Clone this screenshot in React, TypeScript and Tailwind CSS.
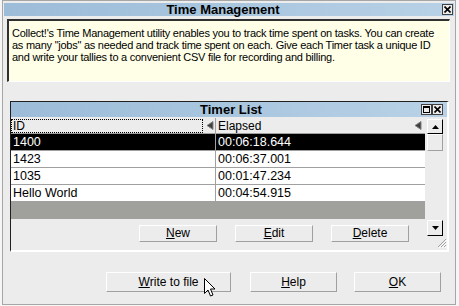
import React from "react";

const font = { fontFamily: '"Liberation Sans", Arial, sans-serif' };

function XBox({ className = "" }: { className?: string }) {
  return (
    <span
      className={`flex h-[11px] w-[11px] items-center justify-center border border-[#404040] bg-[#ececec] ${className}`}
    >
      <svg width="7" height="7" viewBox="0 0 7 7">
        <path d="M0.5 0.5L6.5 6.5M6.5 0.5L0.5 6.5" stroke="#000" strokeWidth="1.6" />
      </svg>
    </span>
  );
}

function RestoreBox() {
  return (
    <span className="flex h-[11px] w-[11px] items-center justify-center border border-[#404040] bg-[#ececec]">
      <span className="h-[7px] w-[7px] border border-black border-t-2" />
    </span>
  );
}

function SortArrow() {
  return (
    <svg width="8" height="9" viewBox="0 0 8 9">
      <path d="M7 0.5L1 4.5L7 8.5Z" fill="#404040" stroke="#808080" strokeWidth="1" />
    </svg>
  );
}

function PanelButton({ label }: { label: React.ReactNode }) {
  return (
    <div className="flex h-[17px] w-[78px] items-center justify-center border border-t-white border-l-white border-r-[#a0a0a0] border-b-[#a0a0a0] bg-[#ececec] text-[12px] text-black">
      {label}
    </div>
  );
}

function DialogButton({ label, w }: { label: React.ReactNode; w: string }) {
  return (
    <div
      className={`flex h-[20px] ${w} items-center justify-center border border-t-white border-l-white border-r-[#a0a0a0] border-b-[#a0a0a0] bg-[#ececec] text-[12px] text-black`}
    >
      {label}
    </div>
  );
}

const rows = [
  ["1400", "00:06:18.644"],
  ["1423", "00:06:37.001"],
  ["1035", "00:01:47.234"],
  ["Hello World", "00:04:54.915"],
];

export default function App() {
  return (
    <div className="flex h-[306px] w-[459px] overflow-hidden bg-[#f6f6f6]" style={font}>
      {/* background window edge */}
      <div className="w-[2px]" />

      <div className="flex h-[305px] w-[454px] flex-col border border-[#a6a6a6] bg-[#ececec]">
        {/* title bar */}
        <div className="mx-[1px] mt-[2px] flex h-[13px] items-center bg-gradient-to-r from-[#9cbcd8] via-[#a9c6df] to-[#b8d1e6] pr-[1px]">
          <div className="flex-1 text-center text-[13px] font-bold leading-none text-black">
            Time Management
          </div>
          <XBox />
        </div>

        {/* description */}
        <div className="ml-[4px] mr-[5px] mt-[3px] h-[63px] whitespace-nowrap border-l-2 border-t-2 border-l-[#303030] border-t-[#303030] border-r border-b border-r-white border-b-white bg-[#ffffe8] px-[3px] pt-[6px] text-[11px] leading-[12px] tracking-[-0.25px] text-black">
          Collect!'s Time Management utility enables you to track time spent on tasks. You can create
          <br />
          as many "jobs" as needed and track time spent on each. Give each Timer task a unique ID
          <br />
          and write your tallies to a convenient CSV file for recording and billing.
        </div>

        {/* timer list panel */}
        <div className="ml-[7px] mr-[6px] mt-[19px] flex h-[151px] flex-col border-l border-t border-l-[#202020] border-t-[#202020] border-r-2 border-b-2 border-r-white border-b-white">
          <div className="flex h-[15px] items-center bg-gradient-to-r from-[#9cbcd8] via-[#a9c6df] to-[#b8d1e6] pr-[4px]">
            <div className="flex-1 pl-[30px] text-center text-[13px] font-bold leading-none text-black">
              Timer List
            </div>
            <RestoreBox />
            <XBox />
          </div>

          <div className="flex flex-1">
            <div className="flex w-[414px] flex-col">
              {/* header */}
              <div className="mt-[1px] flex h-[16px] border-b border-[#a0a0a0] bg-[#ececec] text-[12px] text-black">
                <div className="flex w-[205px] items-center border-r border-[#a0a0a0]">
                  <div className="flex h-[14px] w-[192px] items-center border border-dotted border-black pl-[1px]">
                    ID
                  </div>
                  <div className="ml-[3px]">
                    <SortArrow />
                  </div>
                </div>
                <div className="flex flex-1 items-center pl-[2px] pr-[3px]">
                  <span className="flex-1">Elapsed</span>
                  <SortArrow />
                </div>
              </div>

              {/* rows */}
              {rows.map(([id, t], i) => (
                <div
                  key={id}
                  className={`flex h-[17px] items-center border-b border-[#a0a0a0] text-[12.5px] ${
                    i === 0 ? "bg-black text-white" : "bg-white text-black"
                  }`}
                >
                  <div className="flex h-full w-[205px] items-center border-r border-[#a0a0a0] pl-[2px]">
                    {id}
                  </div>
                  <div className="pl-[2px]">{t}</div>
                </div>
              ))}

              <div className="h-[17px] bg-[#a0a19d]" />

              <div className="flex flex-1 items-center justify-end gap-[18px] pr-[16px] pb-[3px]">
                <PanelButton label={<><u>N</u>ew</>} />
                <PanelButton label={<><u>E</u>dit</>} />
                <PanelButton label={<><u>D</u>elete</>} />
              </div>
            </div>

            {/* scrollbar */}
            <div className="ml-[2px] flex w-[16px] flex-col pt-[2px] pb-[14px]">
              <div className="flex h-[15px] items-center justify-center border border-t-white border-l-white border-r-black border-b-black bg-[#ececec]">
                <svg width="7" height="4" viewBox="0 0 7 4">
                  <path d="M3.5 0L7 4H0Z" fill="#000" />
                </svg>
              </div>
              <div className="h-[17px] border border-t-white border-l-white border-r-[#a0a0a0] border-b-[#a0a0a0]" />
              <div className="flex-1" />
              <div className="flex h-[16px] items-center justify-center border border-t-white border-l-white border-r-black border-b-black bg-[#ececec]">
                <svg width="7" height="4" viewBox="0 0 7 4">
                  <path d="M0 0H7L3.5 4Z" fill="#000" />
                </svg>
              </div>
            </div>
            <div className="relative w-[4px]">
              <svg className="absolute -left-[6px] bottom-[2px]" width="10" height="10" viewBox="0 0 10 10">
                <path d="M9 1L1 9M9 4L4 9M9 7L7 9" stroke="#a0a0a0" strokeWidth="1" />
                <path d="M10 2L2 10M10 5L5 10M10 8L8 10" stroke="#ffffff" strokeWidth="1" />
              </svg>
            </div>
          </div>
        </div>

        {/* dialog buttons */}
        <div className="mt-[20px] flex items-start pl-[103px]">
          <div className="relative">
            <DialogButton label={<><u>W</u>rite to file</>} w="w-[125px]" />
            <svg className="absolute left-[98px] top-[6px]" width="12" height="19" viewBox="0 0 12 19">
              <path
                d="M0.5 0.5V15.5L4 12L6.5 18L9 17L6.5 11H11Z"
                fill="#fff"
                stroke="#000"
                strokeWidth="1"
                strokeLinejoin="miter"
              />
            </svg>
          </div>
          <div className="ml-[19px]">
            <DialogButton label={<><u>H</u>elp</>} w="w-[87px]" />
          </div>
          <div className="ml-[17px]">
            <DialogButton label={<><u>O</u>K</>} w="w-[87px]" />
          </div>
        </div>
      </div>

      <div className="w-[3px]" />
    </div>
  );
}
